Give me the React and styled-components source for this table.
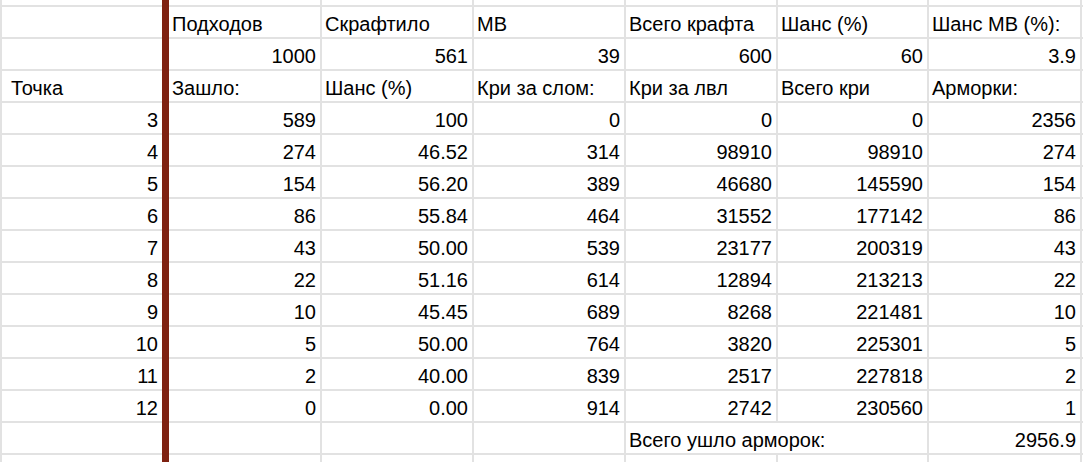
import React from "react";
import styled, { createGlobalStyle } from "styled-components";

const GlobalStyle = createGlobalStyle`
    html, body {
        margin: 0;
        padding: 0;
        background: #fff;
    }
    body {
        font-family: "Liberation Sans", Arial, sans-serif;
        overflow: hidden;
    }
`

const header = ["Подходов", "Скрафтило", "МВ", "Всего крафта", "Шанс (%)", "Шанс МВ (%):"];
const params = ["1000", "561", "39", "600", "60", "3.9"];
const labels = ["Зашло:", "Шанс (%)", "Кри за слом:", "Кри за лвл", "Всего кри", "Арморки:"];

const rows = [
    [3, "589", "100", "0", "0", "0", "2356"],
    [4, "274", "46.52", "314", "98910", "98910", "274"],
    [5, "154", "56.20", "389", "46680", "145590", "154"],
    [6, "86", "55.84", "464", "31552", "177142", "86"],
    [7, "43", "50.00", "539", "23177", "200319", "43"],
    [8, "22", "51.16", "614", "12894", "213213", "22"],
    [9, "10", "45.45", "689", "8268", "221481", "10"],
    [10, "5", "50.00", "764", "3820", "225301", "5"],
    [11, "2", "40.00", "839", "2517", "227818", "2"],
    [12, "0", "0.00", "914", "2742", "230560", "1"],
];

const App = () => {
    return (
        <>
            <GlobalStyle />
            <Sheet>
                {/* partial row cut off at top */}
                <Cell $first $short />
                {header.map((_, i) => <Cell key={"t" + i} $short />)}
                <Cell $short />

                <Cell $first />
                {header.map((h) => <Cell key={h}>{h}</Cell>)}
                <Cell />

                <Cell $first />
                {params.map((p, i) => <Cell key={"p" + i} $right>{p}</Cell>)}
                <Cell />

                <Cell $first $pad>Точка</Cell>
                {labels.map((l) => <Cell key={l}>{l}</Cell>)}
                <Cell />

                {rows.map((r) => (
                    <React.Fragment key={r[0]}>
                        <Cell $first $right>{r[0]}</Cell>
                        {r.slice(1).map((v, i) => <Cell key={i} $right>{v}</Cell>)}
                        <Cell />
                    </React.Fragment>
                ))}

                <Cell $first />
                <Cell />
                <Cell />
                <Cell />
                <Cell $span={2}>Всего ушло арморок:</Cell>
                <Cell $right>2956.9</Cell>
                <Cell />

                <Cell $first />
                {header.map((_, i) => <Cell key={"e" + i} />)}
                <Cell />
            </Sheet>
        </>
    );
};

const Sheet = styled.div`
    display: grid;
    grid-template-columns: 167px 153px 152px 152px 152px 151px 153px 1fr;
    grid-auto-rows: auto;
    border-left: 2px solid #e2e2e2;
    width: 1100px;
    box-sizing: border-box;
`

const Cell = styled.div`
    position: relative;
    box-sizing: border-box;
    display: flex;
    align-items: flex-end;
    justify-content: ${(p) => (p.$right ? "flex-end" : "flex-start")};
    grid-column: ${(p) => (p.$span ? `span ${p.$span}` : "auto")};
    height: ${(p) => (p.$short ? "7px" : "32px")};
    padding: 0 ${(p) => (p.$first ? "11px" : "4px")} 2px ${(p) => (p.$pad ? "9px" : "3px")};
    border-bottom: 2px solid #e2e2e2;
    border-right: ${(p) => (p.$first ? "none" : "2px solid #e2e2e2")};
    font-size: 20px;
    line-height: 22px;
    color: #000;
    white-space: nowrap;
    overflow: visible;

    &::after {
        content: "";
        display: ${(p) => (p.$first ? "block" : "none")};
        position: absolute;
        top: 0;
        right: 0;
        bottom: -2px;
        width: 7px;
        background: #7e2111;
        z-index: 1;
    }
`

export default App;
